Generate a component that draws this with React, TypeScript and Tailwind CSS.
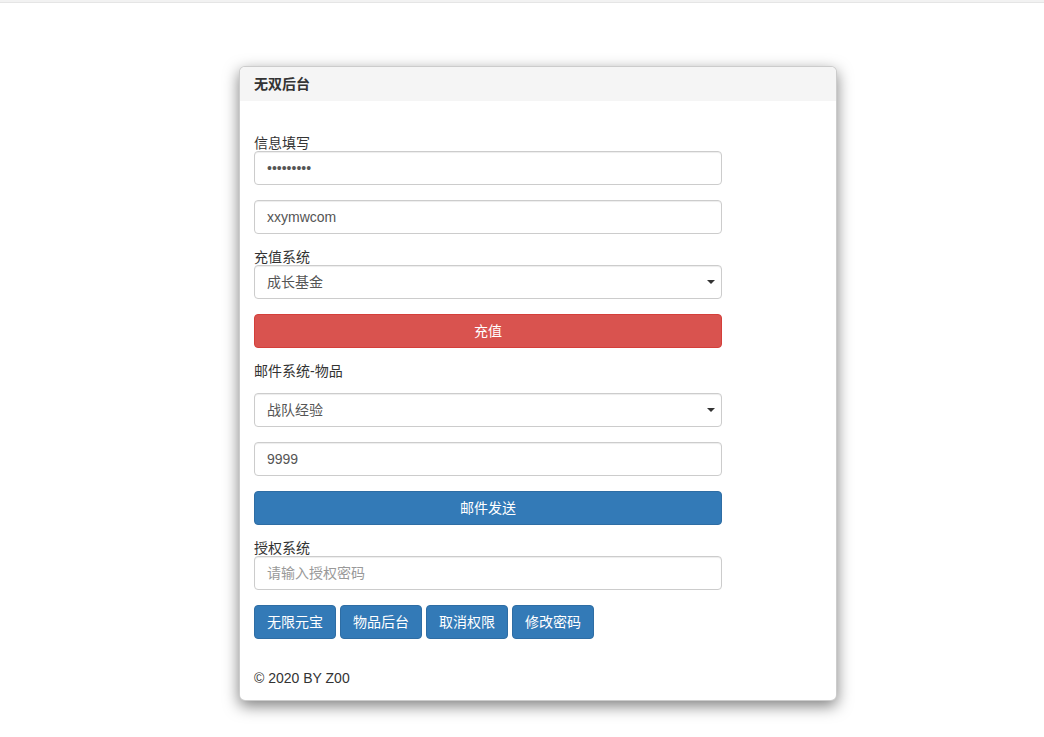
import React from "react";

const font = "font-['Liberation_Sans','Noto_Sans_CJK_SC',sans-serif]";

function Field({ children, placeholder }: { children?: React.ReactNode; placeholder?: boolean }) {
  return (
    <div
      className={`w-[468px] h-[34px] border border-[#cccccc] rounded-[4px] bg-white pl-[12px] flex items-center text-[14px] shadow-[inset_0_1px_1px_rgba(0,0,0,0.075)] ${
        placeholder ? "text-[#999999]" : "text-[#555555]"
      }`}
    >
      {children}
    </div>
  );
}

function Select({ value }: { value: string }) {
  return (
    <div className="relative w-[468px] h-[34px] border border-[#cccccc] rounded-[4px] bg-white pl-[12px] flex items-center text-[14px] text-[#555555] shadow-[inset_0_1px_1px_rgba(0,0,0,0.075)]">
      <span>{value}</span>
      <svg className="absolute right-[6px] top-[14px]" width="8" height="4" viewBox="0 0 8 4">
        <path d="M0 0 L8 0 L4 4 Z" fill="#333333" />
      </svg>
    </div>
  );
}

function Label({ children }: { children: React.ReactNode }) {
  return <div className="leading-[16px] text-[14px] text-[#333333]">{children}</div>;
}

function SmallBtn({ children }: { children: React.ReactNode }) {
  return (
    <div className="w-[82px] h-[34px] rounded-[4px] bg-[#337ab7] border border-[#2e6da4] text-white text-[14px] flex items-center justify-center">
      {children}
    </div>
  );
}

export default function App() {
  return (
    <div className={`${font} min-h-[737px] bg-white text-[#333333]`}>
      <div className="h-[3px] bg-[#f2f2f2] border-b border-[#e5e5e5]" />
      <div className="pt-[63px] pl-[239px]">
        <div className="w-[598px] border border-[rgba(0,0,0,0.2)] rounded-[6px] bg-white shadow-[0_5px_15px_rgba(0,0,0,0.5)] overflow-hidden">
          <div className="h-[34px] bg-[#f5f5f5] pl-[14px] flex items-center text-[14px] font-bold text-[#333333]">
            无双后台
          </div>
          <div className="pt-[34px] pl-[14px] pb-[12px]">
            <Label>信息填写</Label>
            <div className="mb-[15px]">
              <Field>
                <span className="text-[14px] tracking-[0px]">•••••••••</span>
              </Field>
            </div>
            <div className="mb-[15px]">
              <Field>xxymwcom</Field>
            </div>
            <Label>充值系统</Label>
            <div className="mb-[15px]">
              <Select value="成长基金" />
            </div>
            <div className="mb-[15px] w-[468px] h-[34px] rounded-[4px] bg-[#d9534f] border border-[#d43f3a] text-white text-[14px] flex items-center justify-center">
              充值
            </div>
            <div className="mb-[14px]">
              <Label>邮件系统-物品</Label>
            </div>
            <div className="mb-[15px]">
              <Select value="战队经验" />
            </div>
            <div className="mb-[15px]">
              <Field>9999</Field>
            </div>
            <div className="mb-[15px] w-[468px] h-[34px] rounded-[4px] bg-[#337ab7] border border-[#2e6da4] text-white text-[14px] flex items-center justify-center">
              邮件发送
            </div>
            <Label>授权系统</Label>
            <div className="mb-[15px]">
              <Field placeholder>请输入授权密码</Field>
            </div>
            <div className="flex gap-[4px]">
              <SmallBtn>无限元宝</SmallBtn>
              <SmallBtn>物品后台</SmallBtn>
              <SmallBtn>取消权限</SmallBtn>
              <SmallBtn>修改密码</SmallBtn>
            </div>
            <div className="mt-[29px] leading-[20px] text-[14px] text-[#333333]">© 2020 BY Z00</div>
          </div>
        </div>
      </div>
    </div>
  );
}
